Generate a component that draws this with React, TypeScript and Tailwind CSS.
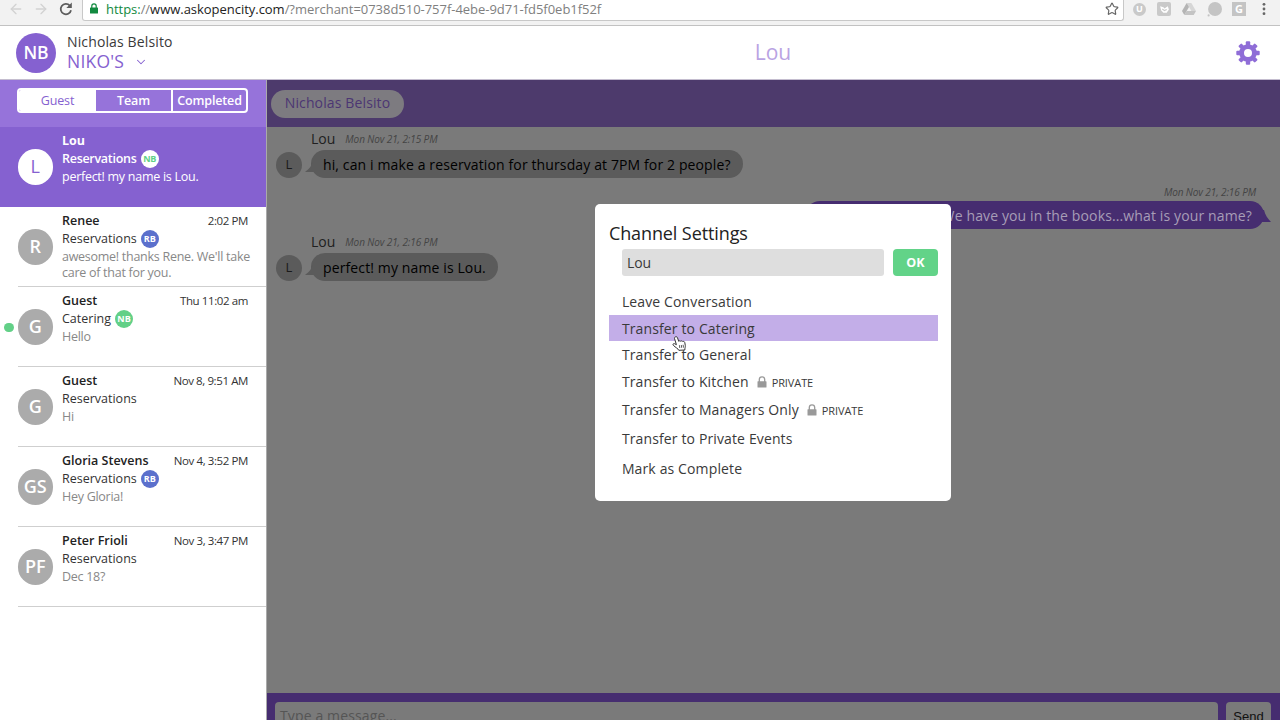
import { useState } from "react";
import clsx from "clsx";
import { ArrowLeft, ArrowRight, ChevronDown, Star } from "lucide-react";

type Conversation = {
  initials: string;
  name: string;
  channel: string;
  preview: string;
  time?: string;
  owner?: string;
  ownerClass?: string;
  unread?: boolean;
};

const conversations: Conversation[] = [
  { initials: "L", name: "Lou", channel: "Reservations", preview: "perfect! my name is Lou.", owner: "NB", ownerClass: "bg-white text-[#62d087]" },
  { initials: "R", name: "Renee", channel: "Reservations", preview: "awesome! thanks Rene. We'll take care of that for you.", time: "2:02 PM", owner: "RB", ownerClass: "bg-[#5b70cc] text-white" },
  { initials: "G", name: "Guest", channel: "Catering", preview: "Hello", time: "Thu 11:02 am", owner: "NB", ownerClass: "bg-[#62d087] text-white", unread: true },
  { initials: "G", name: "Guest", channel: "Reservations", preview: "Hi", time: "Nov 8, 9:51 AM" },
  { initials: "GS", name: "Gloria Stevens", channel: "Reservations", preview: "Hey Gloria!", time: "Nov 4, 3:52 PM", owner: "RB", ownerClass: "bg-[#5b70cc] text-white" },
  { initials: "PF", name: "Peter Frioli", channel: "Reservations", preview: "Dec 18?", time: "Nov 3, 3:47 PM" },
];

const channelActions = [
  { label: "Leave Conversation", className: "h-[27px]" },
  { label: "Transfer to Catering", className: "h-[26px] bg-[#c3aee8]" },
  { label: "Transfer to General", className: "h-[27px]" },
  { label: "Transfer to Kitchen", className: "h-[27px]", isPrivate: true },
  { label: "Transfer to Managers Only", className: "h-[29px]", isPrivate: true },
  { label: "Transfer to Private Events", className: "h-[28px]" },
  { label: "Mark as Complete", className: "mt-[3px] h-[27px]" },
];

const gearTeeth = [0, 45, 90, 135, 180, 225, 270, 315];

function BrowserBar() {
  return (
    <div className="flex h-[26px] shrink-0 items-start border-b border-[#c2c2c2] bg-[#f2f2f2]">
      <div className="flex h-[18px] w-[82px] shrink-0 items-center pl-2">
        <ArrowLeft size={16} strokeWidth={2} className="text-[#d2d2d2]" />
        <ArrowRight size={16} strokeWidth={2} className="ml-[9px] text-[#d2d2d2]" />
        <svg viewBox="0 0 16 16" className="ml-[9px] size-4" fill="none" stroke="#5c5c5c" strokeWidth="1.8">
          <path d="M13 9.2A5.2 5.2 0 1 1 11.8 4.6" />
          <path d="M13.8 1.5V7H8.3Z" fill="#5c5c5c" stroke="none" />
        </svg>
      </div>
      <div className="flex h-[21px] w-[1042px] shrink-0 rounded-b-[3px] border border-t-0 border-[#c8c8c8] bg-white pr-[4px] pl-[7px]">
        <svg viewBox="0 0 8 11" className="mt-[3px] h-[11px] w-2">
          <path d="M1.8 5V3a2.2 2.2 0 0 1 4.4 0v2" fill="none" stroke="#128a40" strokeWidth="1.2" />
          <rect y="4.5" width="8" height="6" rx=".6" fill="#128a40" />
        </svg>
        <span className="ml-[8px] text-[13px] leading-[18px] tracking-[-0.03px] whitespace-nowrap text-[#808080]">
          <span className="text-[#128a40]">https:</span>//<span className="text-[#222]">www.askopencity.com</span>
          /?merchant=0738d510-757f-4ebe-9d71-fd5f0eb1f52f
        </span>
        <Star size={14} strokeWidth={2} className="mt-[2px] ml-auto text-[#666]" />
      </div>
      <div className="ml-[9px] flex h-[18px] items-center text-[9px] font-bold text-white">
        <span className="flex size-[13px] items-center justify-center rounded-full bg-[#c9c9c9]">U</span>
        <span className="ml-[11px] flex size-[14px] items-center justify-center rounded-[2px] bg-[#c9c9c9]">
          <svg viewBox="0 0 10 10" className="size-[11px]">
            <path d="M1 2l3 1 1 1 3-2 1 3-2 3H4L2 6Z" fill="#fff" />
            <path d="M3 4.5l2 1.5 2-1" fill="none" stroke="#c9c9c9" />
          </svg>
        </span>
        <svg viewBox="0 0 14 12" className="ml-[11px] h-3 w-[14px]">
          <path d="M4.7 0h4.6L14 8h-4.6Z" fill="#d6d6d6" />
          <path d="M4.7 0 7 4 2.3 12 0 8Z" fill="#b5b5b5" />
          <path d="M4.6 8H14l-2.3 4H2.3Z" fill="#c4c4c4" />
        </svg>
        <svg viewBox="0 0 14 14" className="ml-[11px] size-[15px]">
          <circle cx="7.5" cy="6.5" r="6.5" fill="#c4c4c4" />
          <circle cx="1.5" cy="12.5" r="1" fill="#c4c4c4" />
        </svg>
        <span className="ml-[10px] flex size-[14px] items-center justify-center bg-[#c4c4c4] text-[11px]">G</span>
        <svg viewBox="0 0 4 14" className="ml-[16px] h-[14px] w-1" fill="#666">
          <circle cx="2" cy="2.3" r="1.4" />
          <circle cx="2" cy="7" r="1.4" />
          <circle cx="2" cy="11.7" r="1.4" />
        </svg>
      </div>
    </div>
  );
}

function GearIcon() {
  return (
    <svg viewBox="-12 -12 24 24" className="absolute right-5 size-6" fill="#8f6dd7">
      <circle r="6.4" fill="none" stroke="#8f6dd7" strokeWidth="4.8" />
      {gearTeeth.map((angle) => (
        <rect key={angle} x="-2.2" y="-11.7" width="4.4" height="5" rx="1" transform={`rotate(${angle})`} />
      ))}
    </svg>
  );
}

function Header() {
  return (
    <header className="flex h-[54px] shrink-0 border-b border-[#c4bdcf] bg-white">
      <div className="flex w-[266px] items-center pl-4">
        <div className="flex size-10 items-center justify-center rounded-full bg-[#8561d0] text-[17.5px] font-semibold text-white">NB</div>
        <div className="ml-[11px] pb-[3px]">
          <div className="text-[14px] leading-[19px] tracking-[0.13px] text-[#3a3a3a]">Nicholas Belsito</div>
          <div className="flex h-[19px] items-center text-[17.5px] leading-[18px] tracking-[0.2px] text-[#8561d0]">
            NIKO'S
            <ChevronDown size={14} strokeWidth={1.8} className="mt-[2px] ml-[10px]" />
          </div>
        </div>
      </div>
      <div className="relative flex flex-1 items-center justify-center text-[21px] text-[#b9a3e3]">
        Lou
        <GearIcon />
      </div>
    </header>
  );
}

function ConversationRow({ item, active }: { item: Conversation; active: boolean }) {
  return (
    <div className={clsx("relative flex h-20 pl-[17.5px]", active ? "bg-[#8561d0] text-white" : "text-[#333]")}>
      {item.unread && <span className="absolute top-[35.5px] left-1 size-[9.5px] rounded-full bg-[#62d087]" />}
      <div
        className={clsx(
          "mt-[22px] flex size-[35.5px] shrink-0 items-center justify-center rounded-full text-[18px]",
          active ? "bg-white text-[#8561d0]" : "bg-[#ababab] font-semibold text-white"
        )}
      >
        {item.initials}
      </div>
      <div className="ml-[9px] w-[204px] shrink-0 pt-[5px] text-[12.5px]">
        <div className="flex h-[18px] items-center justify-between pr-[18px]">
          <span className={clsx(active ? "font-bold" : "font-semibold text-[#222]")}>{item.name}</span>
          <span className="text-[11.5px] tracking-[-0.4px]">{item.time}</span>
        </div>
        <div className={clsx("flex h-[18px] items-center", active && "font-semibold tracking-[-0.28px]")}>
          {item.channel}
          {item.owner && (
            <span className={clsx("ml-1 flex size-[18px] items-center justify-center rounded-full text-[9px] font-bold", item.ownerClass)}>
              {item.owner}
            </span>
          )}
        </div>
        <div className={clsx("mt-px w-[194px] leading-4 tracking-[-0.27px]", active ? "font-medium" : "text-[#888]")}>{item.preview}</div>
      </div>
      {!active && <span className="absolute right-0 bottom-0 left-[18px] h-px bg-[#cfcfcf]" />}
    </div>
  );
}

function Sidebar() {
  return (
    <aside className="flex w-[267px] shrink-0 flex-col border-r border-[#aaa] bg-white">
      <div className="h-[47px] shrink-0 bg-[#9673da] pt-2 pl-[17px]">
        <div className="flex h-[25px] w-[231px] overflow-hidden rounded-[4px] border-2 border-white text-[12.5px] font-semibold tracking-[-0.15px] text-white">
          <div className="flex w-[77px] items-center justify-center bg-white pt-px font-normal text-[#8561d0]">Guest</div>
          <div className="flex w-[75px] items-center justify-center pt-px">Team</div>
          <div className="flex flex-1 items-center justify-center border-l-2 border-white pt-px">Completed</div>
        </div>
      </div>
      {conversations.map((item, i) => (
        <ConversationRow key={i} item={item} active={i === 0} />
      ))}
    </aside>
  );
}

function GuestMessage({ time, text }: { time: string; text: string }) {
  return (
    <div className="flex pl-[9px]">
      <div className="mt-[25px] flex size-[26px] items-center justify-center rounded-full bg-[#5b5b5b] text-[13px] text-[#1a1a1a]">L</div>
      <div className="ml-[9px]">
        <div className="flex h-[23px] items-center text-[14px] text-[#202020]">
          Lou <span className="ml-[10px] pt-[2px] text-[10px] tracking-[-0.1px] text-[#444] italic">{time}</span>
        </div>
        <div className="relative flex h-7 items-center rounded-full bg-[#5b5b5b] pr-3 pl-[12px] text-[14px] tracking-[0.12px] whitespace-nowrap text-black">
          <svg viewBox="0 0 12 12" className="absolute bottom-[6px] left-[-6px] size-3" fill="#5b5b5b">
            <path d="M8 0C7 6 4 9 0 12H12V0Z" />
          </svg>
          {text}
        </div>
      </div>
    </div>
  );
}

function ChannelSettings() {
  const [name, setName] = useState("Lou");

  return (
    <div className="relative h-[297px] w-[356px] rounded-[5px] bg-white px-[13.5px] pt-[17px] text-[#3a3a3a]">
      <h2 className="h-[28px] text-[18px] leading-[24px] tracking-[-0.1px] text-[#222]">Channel Settings</h2>
      <div className="flex h-[27px] gap-[9px] pl-[13px]">
        <input
          value={name}
          onChange={(e) => setName(e.target.value)}
          className="w-[262px] rounded-[3px] bg-[#dedede] px-[5px] text-[14px] outline-none"
        />
        <button className="w-[45px] rounded-[4px] bg-[#62d388] pt-px text-[12.5px] font-bold text-white">OK</button>
      </div>
      <ul className="mt-[12px] text-[14px] tracking-[0.13px]">
        {channelActions.map((action) => (
          <li key={action.label} className={clsx("flex items-center pl-[13px]", action.className)}>
            {action.label}
            {action.isPrivate && (
              <span className="mt-[2px] ml-2 flex items-center text-[11px] tracking-[-0.1px]">
                <svg viewBox="0 0 10 12" className="mr-[5px] mb-[2px] h-3 w-[10px]">
                  <path d="M2.3 6V3.5a2.7 2.7 0 0 1 5.4 0V6" fill="none" stroke="#999" strokeWidth="1.3" />
                  <rect x=".5" y="5.2" width="9" height="6.3" rx=".6" fill="#999" />
                </svg>
                PRIVATE
              </span>
            )}
          </li>
        ))}
      </ul>
      {/* pointer */}
      <svg
        viewBox="0 0 14 15"
        className="absolute top-[132px] left-[77px] h-[15px] w-[14px]"
        fill="#fff"
        stroke="#333"
        strokeWidth="1"
        strokeLinejoin="round"
      >
        <path d="M3.2 1C4.2.4 5.200.8 5.500 1.800L6.700 5.300C7.200 4.600 8.300 4.700 8.700 5.300C9.300 4.700 10.300 4.800 10.700 5.500C11.800 5.100 12.700 5.700 12.800 6.700L13.300 9.500C13.500 11 12.800 12 12.800 14L6.800 14.300C6.200 12.600 3.500 11.500 1.300 9.300C.4 8.300 1.500 7.200 2.600 7.700L4.400 8.700L2.500 2.500C2.300 1.800 2.600 1.300 3.200 1Z" />
        <path d="M7.400 9.200l.4 2.800M9.300 9l.4 2.800M11.100 8.800l.4 2.800" strokeWidth=".8" />
      </svg>
    </div>
  );
}

function ChatPanel() {
  return (
    <main className="relative flex flex-1 flex-col overflow-hidden bg-[#7a7a7a]">
      <div className="flex h-[47px] shrink-0 items-center bg-[#4d3a6c] pl-1">
        <span className="flex h-7 w-[133px] items-center justify-center rounded-full bg-[#7d7b80] pb-[2px] text-[14px] tracking-[0.13px] text-[#4c3673]">
          Nicholas Belsito
        </span>
      </div>
      <div className="flex flex-1 flex-col">
        <GuestMessage time="Mon Nov 21, 2:15 PM" text="hi, can i make a reservation for thursday at 7PM for 2 people?" />
        <div className="mt-[5px] flex flex-col items-end pr-4">
          <span className="mr-2 h-[18px] text-[10px] leading-[18px] tracking-[-0.1px] text-[#444] italic">Mon Nov 21, 2:16 PM</span>
          <div className="relative flex h-7 w-[458px] items-center justify-end rounded-full bg-[#462d70] pr-[12px] text-[14px] tracking-[0.13px] whitespace-nowrap text-[#a79db7]">
            Great! We have you in the books...what is your name?
            <svg viewBox="0 0 12 12" className="absolute right-[-7px] bottom-[7px] size-3" fill="#462d70">
              <path d="M5 0C6 5 9 9 12 12H0V0Z" />
            </svg>
          </div>
        </div>
        <div className="mt-[1px]">
          <GuestMessage time="Mon Nov 21, 2:16 PM" text="perfect! my name is Lou." />
        </div>
      </div>
      <div className="flex h-[27px] shrink-0 items-start gap-2 overflow-hidden bg-[#462d70] pt-[9px] pl-2">
        <div className="h-8 w-[943px] rounded-[4px] bg-[#7a7a7a] pl-[5px] text-[14px] leading-[27px] tracking-[0.13px] text-[#555]">Type a message...</div>
        <div className="h-8 w-[45px] rounded-[4px] bg-[#7a7a7a] text-center font-['Liberation_Sans'] text-[13px] leading-[29px] text-[#111]">Send</div>
      </div>
      <div className="absolute top-[124.4px] left-[328.4px]">
        <ChannelSettings />
      </div>
    </main>
  );
}

export default function App() {
  return (
    <div className="flex h-[720px] w-[1280px] flex-col overflow-hidden font-['Open_Sans','Noto_Sans',sans-serif]">
      <BrowserBar />
      <Header />
      <div className="flex min-h-0 flex-1">
        <Sidebar />
        <ChatPanel />
      </div>
    </div>
  );
}
